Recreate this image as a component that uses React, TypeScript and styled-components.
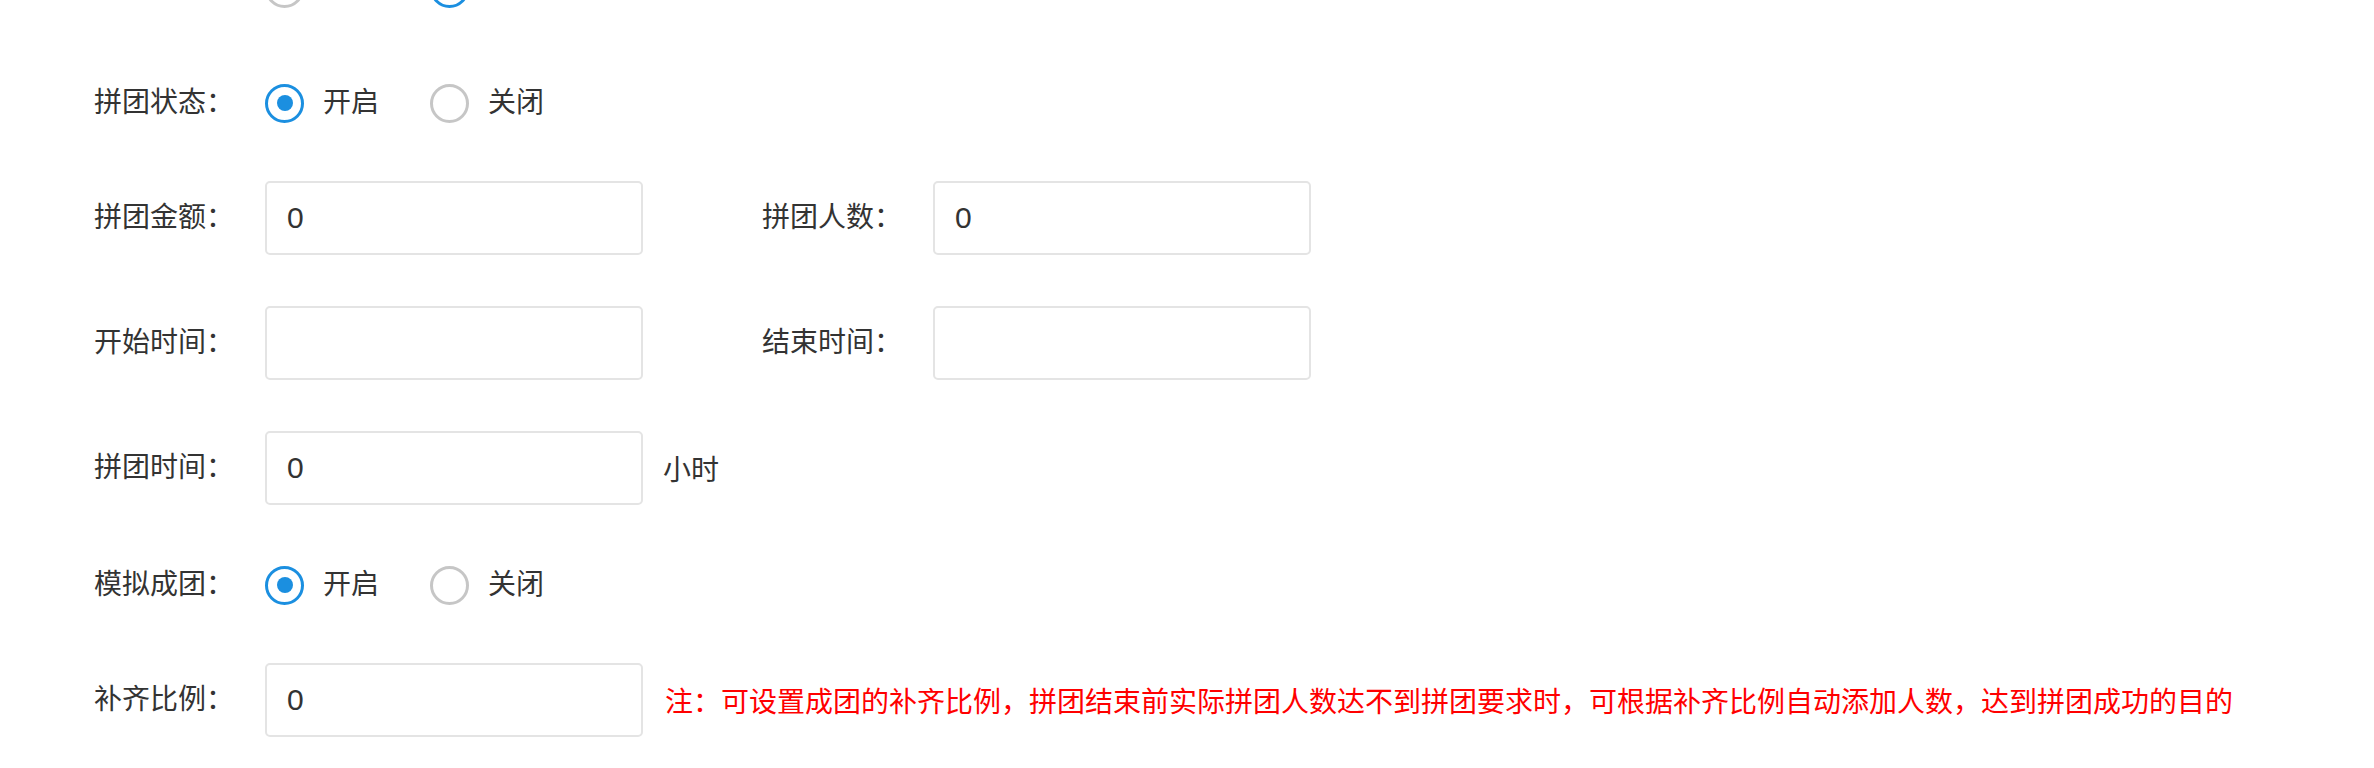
import React, { useState } from 'react';
import styled, { createGlobalStyle } from 'styled-components';

const GlobalStyle = createGlobalStyle`
  html, body {
    margin: 0;
    padding: 0;
    background: #ffffff;
    overflow: hidden;
  }
  body {
    font-family: "Liberation Sans", "Noto Sans CJK SC", sans-serif;
    color: #333333;
  }
`;

interface RadioOption {
  label: string;
  value: string;
}

interface RadioGroupProps {
  options: RadioOption[];
  value: string;
  onChange: (v: string) => void;
}

const RadioGroup: React.FC<RadioGroupProps> = ({ options, value, onChange }) => {
  return (
    <RadioList>
      {options.map((o) => (
        <RadioItem key={o.value} onClick={() => onChange(o.value)}>
          <RadioCircle $checked={o.value === value} />
          <RadioText>{o.label}</RadioText>
        </RadioItem>
      ))}
    </RadioList>
  );
};

const onOff: RadioOption[] = [
  { label: '开启', value: 'on' },
  { label: '关闭', value: 'off' },
];

const App: React.FC = () => {
  const [topMode, setTopMode] = useState('on');
  const [groupState, setGroupState] = useState('on');
  const [simulate, setSimulate] = useState('on');
  const [amount, setAmount] = useState('0');
  const [people, setPeople] = useState('0');
  const [startTime, setStartTime] = useState('');
  const [endTime, setEndTime] = useState('');
  const [hours, setHours] = useState('0');
  const [ratio, setRatio] = useState('0');

  return (
    <>
      <GlobalStyle />
      <Form>
        {/* row cut off by the scroll position */}
        <Row $kind="radio" $spacing={57}>
          <Field>
            <Label />
            <RadioGroup
              options={[
                { label: '关闭', value: 'off' },
                { label: '开启', value: 'on' },
              ]}
              value={topMode}
              onChange={setTopMode}
            />
          </Field>
        </Row>

        <Row $kind="radio">
          <Field>
            <Label>拼团状态：</Label>
            <RadioGroup options={onOff} value={groupState} onChange={setGroupState} />
          </Field>
        </Row>

        <Row $kind="input">
          <Field>
            <Label>拼团金额：</Label>
            <TextInput value={amount} onChange={(e) => setAmount(e.target.value)} />
          </Field>
          <Field>
            <Label>拼团人数：</Label>
            <TextInput value={people} onChange={(e) => setPeople(e.target.value)} />
          </Field>
        </Row>

        <Row $kind="input">
          <Field>
            <Label>开始时间：</Label>
            <TextInput value={startTime} onChange={(e) => setStartTime(e.target.value)} />
          </Field>
          <Field>
            <Label>结束时间：</Label>
            <TextInput value={endTime} onChange={(e) => setEndTime(e.target.value)} />
          </Field>
        </Row>

        <Row $kind="input">
          <Field>
            <Label>拼团时间：</Label>
            <TextInput value={hours} onChange={(e) => setHours(e.target.value)} />
            <Suffix>小时</Suffix>
          </Field>
        </Row>

        <Row $kind="radio">
          <Field>
            <Label>模拟成团：</Label>
            <RadioGroup options={onOff} value={simulate} onChange={setSimulate} />
          </Field>
        </Row>

        <Row $kind="input">
          <Field>
            <Label>补齐比例：</Label>
            <TextInput value={ratio} onChange={(e) => setRatio(e.target.value)} />
            <Note>
              注：可设置成团的补齐比例，拼团结束前实际拼团人数达不到拼团要求时，可根据补齐比例自动添加人数，达到拼团成功的目的
            </Note>
          </Field>
        </Row>
      </Form>
    </>
  );
};

export default App;

const Form = styled.div`
  display: flex;
  flex-direction: column;
  margin-top: -41px;
  padding-left: 94px;
`;

const Row = styled.div<{ $kind: 'radio' | 'input'; $spacing?: number }>`
  display: flex;
  flex-direction: row;
  align-items: center;
  gap: 119px;
  height: ${(p) => (p.$kind === 'radio' ? '58px' : '74px')};
  margin-bottom: ${(p) => p.$spacing ?? (p.$kind === 'radio' ? 49 : 51)}px;
`;

const Field = styled.div`
  display: flex;
  flex-direction: row;
  align-items: center;
`;

const Label = styled.div`
  flex: 0 0 171px;
  width: 171px;
  font-size: 28px;
  line-height: 40px;
  color: #333333;
  white-space: nowrap;
`;

const TextInput = styled.input`
  box-sizing: border-box;
  width: 378px;
  height: 74px;
  padding: 0 20px;
  border: 2px solid #e4e4e4;
  border-radius: 5px;
  font-family: "Liberation Sans", "Noto Sans CJK SC", sans-serif;
  font-size: 30px;
  color: #333333;
  background: #ffffff;
  outline: none;
`;

const Suffix = styled.span`
  margin-left: 20px;
  font-size: 28px;
  color: #333333;
  white-space: nowrap;
`;

const Note = styled.span`
  margin-left: 22px;
  font-size: 28px;
  color: #ff0000;
  white-space: nowrap;
`;

const RadioList = styled.div`
  display: flex;
  flex-direction: row;
  align-items: center;
  gap: 51px;
`;

const RadioItem = styled.label`
  display: flex;
  flex-direction: row;
  align-items: center;
  gap: 19px;
  cursor: pointer;
`;

const RadioCircle = styled.span<{ $checked: boolean }>`
  box-sizing: border-box;
  display: flex;
  align-items: center;
  justify-content: center;
  width: 39px;
  height: 39px;
  border-radius: 50%;
  border: 3px solid ${(p) => (p.$checked ? '#1b8fe0' : '#c6c6c6')};
  background: #ffffff;

  &::after {
    content: '';
    display: ${(p) => (p.$checked ? 'block' : 'none')};
    width: 16px;
    height: 16px;
    border-radius: 50%;
    background: #1b8fe0;
  }
`;

const RadioText = styled.span`
  font-size: 28px;
  line-height: 40px;
  color: #333333;
  white-space: nowrap;
`;
